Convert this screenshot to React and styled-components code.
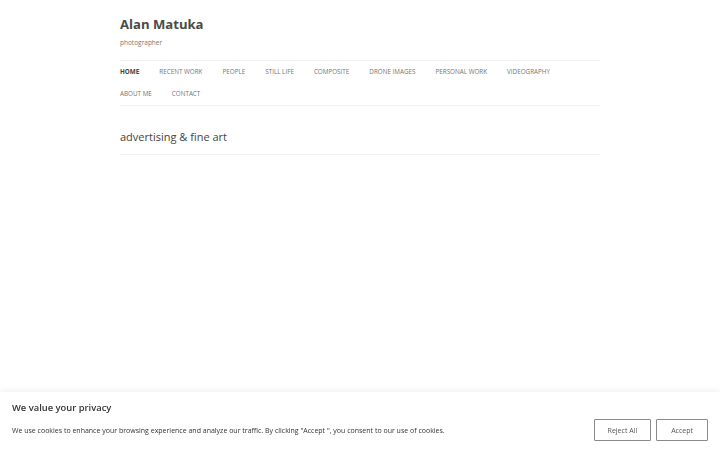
import React from 'react';
import styled, { createGlobalStyle } from 'styled-components';

const GlobalStyle = createGlobalStyle`
  html, body {
    margin: 0;
    padding: 0;
    background: #fff;
    font-family: "Open Sans", "Liberation Sans", sans-serif;
    color: #444;
  }
`;

const menu = [
  'Home',
  'Recent Work',
  'People',
  'Still Life',
  'Composite',
  'Drone Images',
  'Personal Work',
  'Videography',
  'About Me',
  'Contact',
];

function App() {
  return (
    <>
      <GlobalStyle />
      <Page>
        <Header>
          <SiteTitle>Alan Matuka</SiteTitle>
          <Tagline>photographer</Tagline>
          <Nav>
            {menu.map((item, idx) => (
              <NavItem key={item} $current={idx === 0}>
                {item}
              </NavItem>
            ))}
          </Nav>
        </Header>
        <Content>
          <EntryTitle>advertising &amp; fine art</EntryTitle>
        </Content>
      </Page>
      <CookieBar>
        <CookieText>
          <CookieTitle>We value your privacy</CookieTitle>
          <CookieBody>
            We use cookies to enhance your browsing experience and analyze our traffic. By
            clicking "Accept ", you consent to our use of cookies.
          </CookieBody>
        </CookieText>
        <Buttons>
          <CookieButton>Reject All</CookieButton>
          <CookieButton>Accept</CookieButton>
        </Buttons>
      </CookieBar>
    </>
  );
}

export default App;

const Page = styled.div`
  width: 480px;
  margin: 0 auto;
  height: 450px;
`;

const Header = styled.header`
  padding-top: 13px;
`;

const SiteTitle = styled.h1`
  margin: 0;
  font-size: 13.1px;
  font-weight: 700;
  line-height: 22px;
  color: #4a4a4a;
`;

const Tagline = styled.h2`
  margin: 2px 0 0;
  font-size: 6.5px;
  font-weight: 400;
  line-height: 12px;
  color: #777;
`;

const Nav = styled.nav`
  margin-top: 11px;
  display: flex;
  flex-wrap: wrap;
  border-top: 1px solid #f0f0f0;
  border-bottom: 1px solid #f0f0f0;
`;

const NavItem = styled.a`
  margin-right: 20px;
  font-size: 6.3px;
  line-height: 22px;
  text-transform: uppercase;
  color: ${(p) => (p.$current ? '#444' : '#757575')};
  font-weight: ${(p) => (p.$current ? 700 : 400)};
  text-decoration: none;
`;

const Content = styled.main`
  padding-top: 23px;
`;

const EntryTitle = styled.h1`
  margin: 0;
  padding-bottom: 9px;
  font-size: 11px;
  font-weight: 400;
  line-height: 16px;
  color: #444;
  border-bottom: 1px solid #f2f2f2;
`;

const CookieBar = styled.div`
  position: fixed;
  left: 0;
  right: 0;
  bottom: 0;
  height: 58px;
  box-sizing: border-box;
  padding: 0 12px;
  display: flex;
  align-items: flex-end;
  justify-content: space-between;
  background: #fff;
  box-shadow: 0 -1px 8px rgba(0, 0, 0, 0.07);
`;

const CookieText = styled.div`
  padding-bottom: 13px;
`;

const CookieTitle = styled.div`
  font-size: 9.4px;
  font-weight: 600;
  color: #333;
  line-height: 14px;
  margin-bottom: 10px;
`;

const CookieBody = styled.p`
  margin: 0;
  font-size: 7px;
  line-height: 12px;
  color: #333;
`;

const Buttons = styled.div`
  display: flex;
  gap: 5px;
  padding-bottom: 9px;
`;

const CookieButton = styled.button`
  height: 22px;
  padding: 0 13px;
  background: #fff;
  border: 1px solid #8a8a8a;
  border-radius: 1px;
  font-family: "Open Sans", "Liberation Sans", sans-serif;
  font-size: 7px;
  color: #555;
  &:last-child {
    padding: 0 14px;
  }
`;
